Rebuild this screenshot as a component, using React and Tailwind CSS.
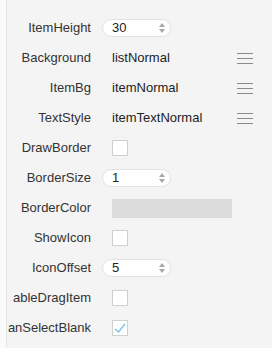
import React from 'react';

const Spin = ({ value }) => (
  <div className="flex items-center justify-between w-[69px] h-[18px] rounded-full bg-white border border-[#e2e2e2] pl-[9px] pr-[4px]">
    <span className="text-[#222]">{value}</span>
    <svg width="8" height="12" viewBox="0 0 8 12" className="text-[#a8a8a8]">
      <path d="M4 1 L7 5 H1 Z" fill="currentColor" />
      <path d="M4 11 L7 7 H1 Z" fill="currentColor" />
    </svg>
  </div>
);

const Check = ({ checked }) => (
  <div className="ml-[10px] w-[16px] h-[16px] bg-white border border-[#cfcfcf] flex items-center justify-center">
    {checked && (
      <svg width="14" height="14" viewBox="0 0 14 14">
        <path d="M2 8 L5.5 11 L12 3" fill="none" stroke="#7cc4ee" strokeWidth="1.4" />
      </svg>
    )}
  </div>
);

const Text = ({ value, menu }) => (
  <div className="flex items-center justify-between w-full pl-[10px] pr-[19px]">
    <span className="text-[#222]">{value}</span>
    {menu && (
      <div className="flex flex-col gap-[4px] w-[16px]">
        <div className="h-px bg-[#8a8a8a]" />
        <div className="h-px bg-[#8a8a8a]" />
        <div className="h-px bg-[#8a8a8a]" />
      </div>
    )}
  </div>
);

// the last two labels are clipped by the panel in the original, only the visible part is shown
const rows = [
  ['ItemHeight', <Spin value="30" />],
  ['Background', <Text value="listNormal" menu />],
  ['ItemBg', <Text value="itemNormal" menu />],
  ['TextStyle', <Text value="itemTextNormal" menu />],
  ['DrawBorder', <Check />],
  ['BorderSize', <Spin value="1" />],
  ['BorderColor', <div className="ml-[10px] w-[120px] h-[19px] bg-[#dcdcdc]" />],
  ['ShowIcon', <Check />],
  ['IconOffset', <Spin value="5" />],
  ['ableDragItem', <Check />],
  ['anSelectBlank', <Check checked />],
];

const App = () => {
  return (
    <div className="w-[272px] h-[348px] flex bg-[#f4f4f4] overflow-hidden" style={{ fontFamily: '"Liberation Sans", Arial, sans-serif' }}>
      <div className="w-[7px] bg-[#fafafa] border-r border-[#e3e3e3] shrink-0" />
      <div className="flex-1 pt-[13px] text-[13px]">
        {rows.map(([label, control]) => (
          <div key={label} className="flex items-center h-[30px]">
            <div className="ml-[5px] w-[79px] shrink-0 flex justify-end whitespace-nowrap text-[#333]">
              <span>{label}</span>
            </div>
            <div className="flex-1 ml-[11px] flex items-center">{control}</div>
          </div>
        ))}
      </div>
    </div>
  );
};

export default App;
